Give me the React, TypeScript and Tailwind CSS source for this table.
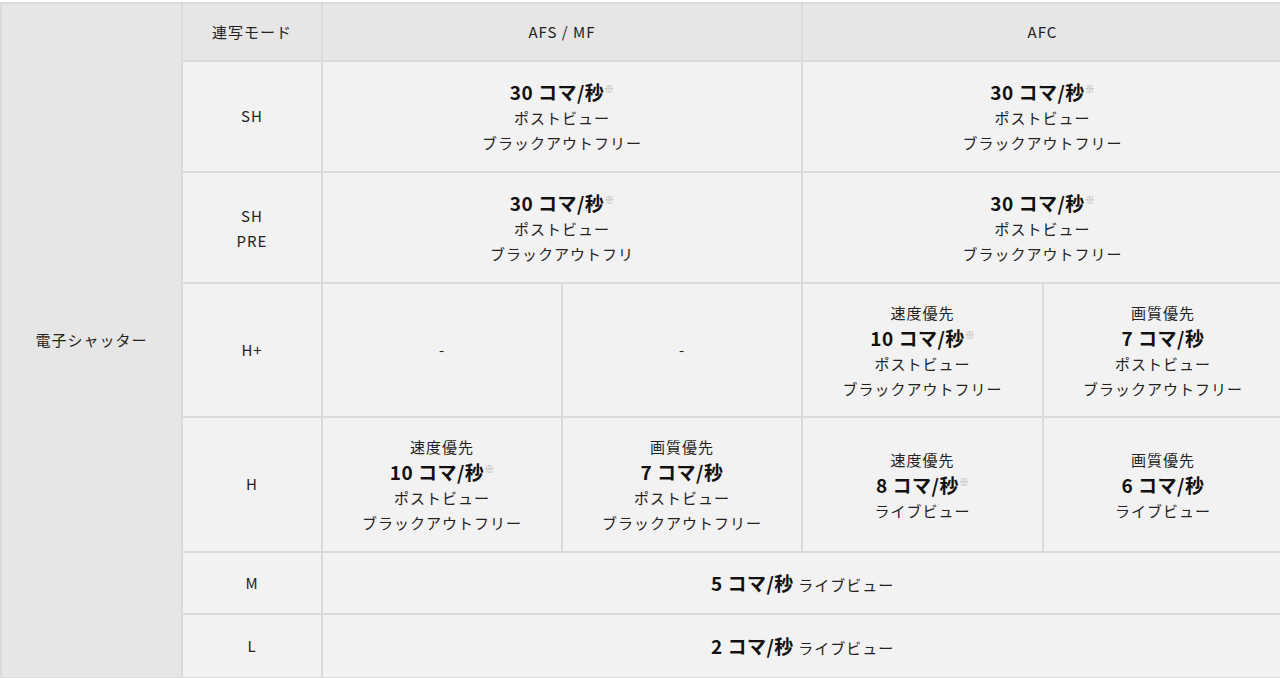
import React from "react";

const font = { fontFamily: '"Noto Sans CJK JP", "Noto Sans", sans-serif' };

function Rate({ v, note = true }: { v: string; note?: boolean }) {
  return (
    <div className="text-[19px] font-bold leading-[26px] text-[#111] tracking-[0.5px]">
      {v} コマ/秒
      {note && <span className="relative -top-[7px] text-[10px] leading-none font-normal text-[#a8a8a8] tracking-normal">※</span>}
    </div>
  );
}

function L({ children }: { children: React.ReactNode }) {
  return <div className="leading-[25px]">{children}</div>;
}

const td = "border-2 border-[#dadada] bg-[#f2f2f2] text-center align-middle p-0";
const th = "border-2 border-[#dadada] bg-[#e6e6e6] text-center align-middle p-0 font-normal";

export default function App() {
  return (
    <div className="w-[1280px] h-[678px] overflow-hidden bg-white pt-[2px]" style={font}>
      <table className="table-fixed border-collapse text-[15px] tracking-[1px] text-[#222] w-[1282px]">
        <colgroup>
          <col className="w-[181px]" />
          <col className="w-[140px]" />
          <col className="w-[240px]" />
          <col className="w-[240px]" />
          <col className="w-[241px]" />
          <col className="w-[240px]" />
        </colgroup>
        <tbody>
          <tr className="h-[58px]">
            <th rowSpan={8} className={th}>電子シャッター</th>
            <th className={th}>連写モード</th>
            <th colSpan={2} className={th}>AFS / MF</th>
            <th colSpan={2} className={th}>AFC</th>
          </tr>
          <tr className="h-[111px]">
            <td className={td}>SH</td>
            <td colSpan={2} className={td}>
              <Rate v="30" />
              <L>ポストビュー</L>
              <L>ブラックアウトフリー</L>
            </td>
            <td colSpan={2} className={td}>
              <Rate v="30" />
              <L>ポストビュー</L>
              <L>ブラックアウトフリー</L>
            </td>
          </tr>
          <tr className="h-[111px]">
            <td className={td}>
              <L>SH</L>
              <L>PRE</L>
            </td>
            <td colSpan={2} className={td}>
              <Rate v="30" />
              <L>ポストビュー</L>
              <L>ブラックアウトフリ</L>
            </td>
            <td colSpan={2} className={td}>
              <Rate v="30" />
              <L>ポストビュー</L>
              <L>ブラックアウトフリー</L>
            </td>
          </tr>
          <tr className="h-[134px]">
            <td className={td}>H+</td>
            <td className={td}>-</td>
            <td className={td}>-</td>
            <td className={td}>
              <L>速度優先</L>
              <Rate v="10" />
              <L>ポストビュー</L>
              <L>ブラックアウトフリー</L>
            </td>
            <td className={td}>
              <L>画質優先</L>
              <Rate v="7" note={false} />
              <L>ポストビュー</L>
              <L>ブラックアウトフリー</L>
            </td>
          </tr>
          <tr className="h-[135px]">
            <td className={td}>H</td>
            <td className={td}>
              <L>速度優先</L>
              <Rate v="10" />
              <L>ポストビュー</L>
              <L>ブラックアウトフリー</L>
            </td>
            <td className={td}>
              <L>画質優先</L>
              <Rate v="7" note={false} />
              <L>ポストビュー</L>
              <L>ブラックアウトフリー</L>
            </td>
            <td className={td}>
              <L>速度優先</L>
              <Rate v="8" />
              <L>ライブビュー</L>
            </td>
            <td className={td}>
              <L>画質優先</L>
              <Rate v="6" note={false} />
              <L>ライブビュー</L>
            </td>
          </tr>
          <tr className="h-[62px]">
            <td className={td}>M</td>
            <td colSpan={4} className={td}>
              <span className="text-[19px] font-bold text-[#111] tracking-[0.5px]">5 コマ/秒</span> ライブビュー
            </td>
          </tr>
          <tr className="h-[64px]">
            <td className={td}>L</td>
            <td colSpan={4} className={td}>
              <span className="text-[19px] font-bold text-[#111] tracking-[0.5px]">2 コマ/秒</span> ライブビュー
            </td>
          </tr>
        </tbody>
      </table>
    </div>
  );
}
